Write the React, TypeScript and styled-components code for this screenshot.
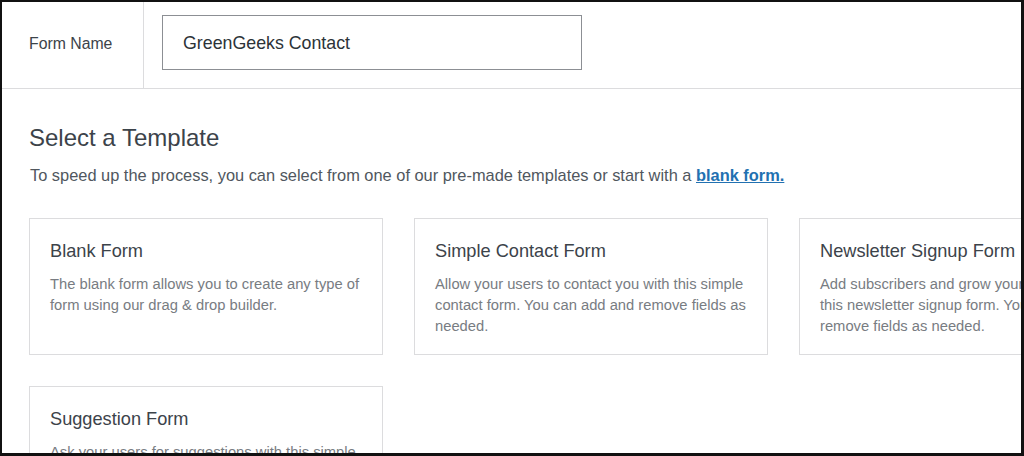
import React from "react";
import styled, { createGlobalStyle } from "styled-components";

const Global = createGlobalStyle`
  html, body { margin: 0; padding: 0; background: #fff; }
  * { box-sizing: border-box; }
  body { font-family: "Liberation Sans", Arial, sans-serif; }
`;

const Frame = styled.div`
  width: 1024px;
  height: 456px;
  border-style: solid;
  border-color: #111;
  border-width: 2px 3px 3px 2px;
  overflow: hidden;
  background: #fff;
`;

const HeaderRow = styled.div`
  display: flex;
  align-items: flex-start;
  height: 87px;
  border-bottom: 1px solid #dcdcde;
`;

const LabelCell = styled.div`
  width: 142px;
  height: 100%;
  border-right: 1px solid #dcdcde;
  padding: 14px 0 0 27px;
  font-size: 15.8px;
  line-height: 55px;
  color: #3c434a;
`;

const NameInput = styled.input`
  margin: 13px 0 0 18px;
  width: 420px;
  height: 55px;
  border: 1px solid #8c8f94;
  padding: 2px 20px 0;
  font-family: "Liberation Sans", Arial, sans-serif;
  font-size: 17.8px;
  color: #2c3338;
  background: #fff;
  outline: none;
`;

const Section = styled.div`
  padding: 35px 0 0 27px;
`;

const Title = styled.h2`
  margin: 0;
  font-size: 24px;
  line-height: 28px;
  font-weight: 400;
  color: #3c434a;
`;

const Intro = styled.p`
  margin: 13px 0 0;
  padding-left: 1px;
  font-size: 16.4px;
  line-height: 20px;
  color: #50575e;
  white-space: nowrap;
`;

const Link = styled.a`
  color: #2271b1;
  font-weight: 700;
  text-decoration: underline;
`;

const CardGrid = styled.div`
  margin-top: 33px;
  display: grid;
  grid-template-columns: repeat(3, 354px);
  gap: 31px;
`;

const Card = styled.div`
  height: 137px;
  border: 1px solid #dcdcde;
  padding: 20px 20px 0;
  background: #fff;
`;

const CardTitle = styled.h3`
  margin: 0;
  font-size: 18.2px;
  line-height: 24px;
  font-weight: 400;
  color: #3c434a;
  white-space: nowrap;
`;

const CardText = styled.p`
  margin: 11px 0 0;
  font-size: 14.75px;
  line-height: 21px;
  color: #787c82;
  width: 314px;
`;

const templates = [
  {
    title: "Blank Form",
    text: "The blank form allows you to create any type of form using our drag & drop builder.",
  },
  {
    title: "Simple Contact Form",
    text: "Allow your users to contact you with this simple contact form. You can add and remove fields as needed.",
  },
  {
    title: "Newsletter Signup Form",
    text: "Add subscribers and grow your email list with this newsletter signup form. You can add and remove fields as needed.",
  },
  {
    title: "Suggestion Form",
    text: "Ask your users for suggestions with this simple form template. You can add and remove fields as needed.",
  },
];

export default function App() {
  return (
    <>
      <Global />
      <Frame>
        <HeaderRow>
          <LabelCell>Form Name</LabelCell>
          <NameInput defaultValue="GreenGeeks Contact" />
        </HeaderRow>
        <Section>
          <Title>Select a Template</Title>
          <Intro>
            To speed up the process, you can select from one of our pre-made templates or start with a{" "}
            <Link href="#">blank form.</Link>
          </Intro>
          <CardGrid>
            {templates.map((t) => (
              <Card key={t.title}>
                <CardTitle>{t.title}</CardTitle>
                <CardText>{t.text}</CardText>
              </Card>
            ))}
          </CardGrid>
        </Section>
      </Frame>
    </>
  );
}
